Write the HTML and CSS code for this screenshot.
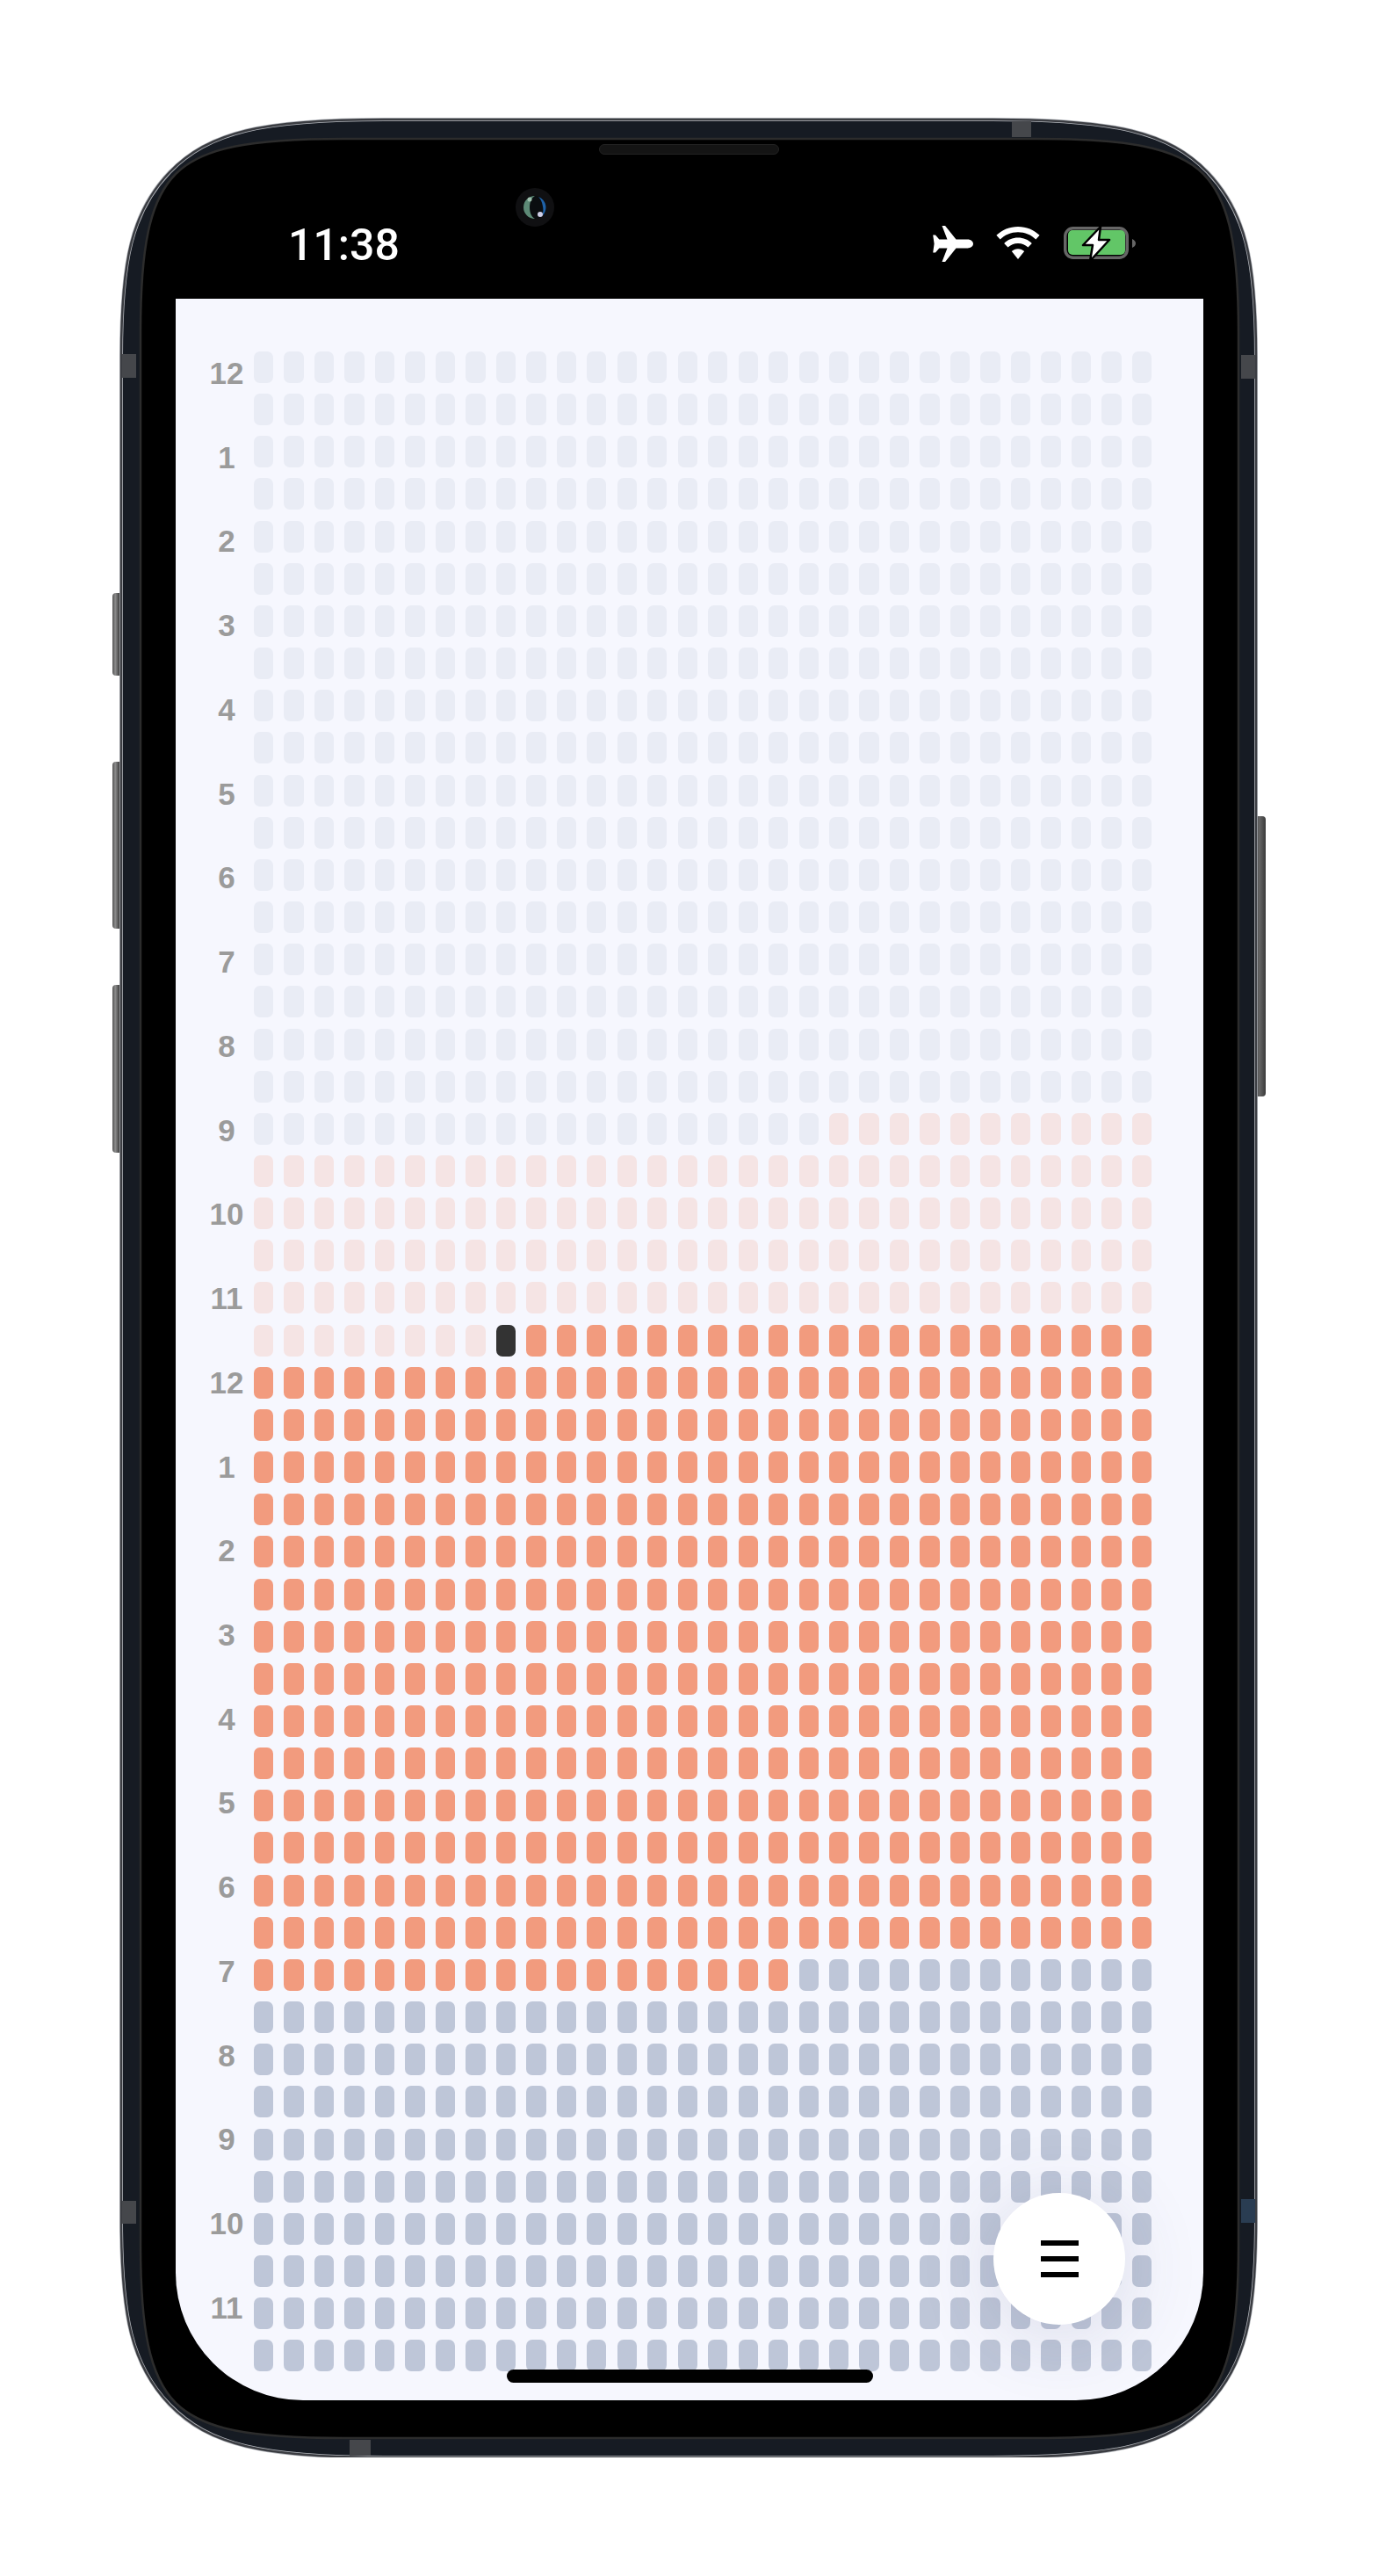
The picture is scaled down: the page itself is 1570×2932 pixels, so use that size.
FILE: index.html
```html
<!DOCTYPE html>
<html lang="en">
<head>
    <meta charset="UTF-8">
    <meta name="viewport" content="width=device-width, initial-scale=1.0">
    <title>Day grid</title>
    <link rel="stylesheet" href="styles.css">
</head>
<body>
    <div class="phone">
        <!-- side buttons -->
        <div class="side-btn btn-mute"></div>
        <div class="side-btn btn-up"></div>
        <div class="side-btn btn-down"></div>
        <div class="side-btn btn-power"></div>

        <!-- frame body, drawn because the corners are not circular -->
        <svg class="frame" viewBox="0 0 1292 2661">
            <path d="M0 270C0 160 12 105 55 60C100 14 160 0 300 0H992C1132 0 1192 14 1237 60C1280 105 1292 160 1292 270V2391C1292 2501 1280 2556 1237 2601C1192 2647 1132 2661 992 2661H300C160 2661 100 2647 55 2601C12 2556 0 2501 0 2391Z" fill="#161b23" stroke="#b4b7bd" stroke-width="4"/>
            <path d="M0 270C0 160 12 105 55 60C100 14 160 0 300 0H992C1132 0 1192 14 1237 60C1280 105 1292 160 1292 270V2391C1292 2501 1280 2556 1237 2601C1192 2647 1132 2661 992 2661H300C160 2661 100 2647 55 2601C12 2556 0 2501 0 2391Z" fill="none" stroke="#3b3d42" stroke-width="2.500"/>
            <path transform="translate(22 22)" d="M0 220C0 125 10 70 40 40C70 10 125 0 230 0H1020C1125 0 1180 10 1210 40C1240 70 1250 125 1250 220V2397C1250 2492 1240 2547 1210 2577C1180 2607 1125 2617 1020 2617H230C125 2617 70 2607 40 2577C10 2547 0 2492 0 2397Z" fill="#000" stroke="#2c2c2c" stroke-width="2.500"/>
        </svg>

        <!-- antenna bands -->
        <div class="band band-tl"></div>
        <div class="band band-tr"></div>
        <div class="band band-top"></div>
        <div class="band band-bl"></div>
        <div class="band band-br"></div>
        <div class="band band-bottom"></div>

        <div class="bezel">
            <div class="speaker"></div>
            <svg class="camera" viewBox="0 0 44 44">
                <circle cx="22" cy="22" r="22" fill="#101012"/>
                <circle cx="22" cy="22" r="13" fill="#0a0d10"/>
                <path d="M22 9a13 13 0 0 0 0 26c-4-2-6-7-6-13s2-11 6-13z" fill="#5d8a76"/>
                <path d="M26 10a13 13 0 0 1 4 22c1-3 2-6 1-11s-2-8-5-11z" fill="#1f62a8"/>
                <circle cx="16" cy="13" r="2.500" fill="#9fc0ae"/>
                <circle cx="28" cy="30" r="3" fill="#cfd0e8"/>
            </svg>

            <div class="status">
                <span class="time">11:38</span>
                <div class="status-icons">
                    <svg class="ico-plane" viewBox="0 0 46 41"><path fill="#fff" d="M10.500 0h3.600L26.500 15.600h13.200c3.400 0 6.300 2.200 6.300 4.900s-2.900 4.900-6.300 4.900H26.500L14.100 41h-3.600l6-15.600H7.300L3 30.500H.2L1.600 20.500.2 10.500H3l4.300 5.100h9.200z"/></svg>
                    <svg class="ico-wifi" viewBox="0 0 50 37"><path fill="#fff" d="M25 0c9.500 0 18.200 3.700 24.600 9.800l-4.300 4.600C40 9.300 32.900 6.200 25 6.200S10 9.300 4.700 14.400L.4 9.800C6.800 3.700 15.500 0 25 0zM25 12.600c6.100 0 11.700 2.400 15.800 6.300l-4.300 4.600c-3-2.800-7-4.600-11.500-4.600s-8.500 1.800-11.500 4.600l-4.300-4.600c4.100-3.900 9.700-6.300 15.800-6.300zM25 25.200c2.800 0 5.300 1.100 7.200 2.900L25 37l-7.200-8.900c1.900-1.800 4.400-2.900 7.200-2.900z"/></svg>
                    <svg class="ico-battery" viewBox="0 0 83 41">
                        <rect x="2.750" y="2.750" width="70.500" height="33.500" rx="9" fill="none" stroke="#666" stroke-width="3.500"/>
                        <rect x="6" y="5" width="65" height="28" rx="5" fill="#62c667"/>
                        <path d="M79 15c2.500 1 4 3 4 5s-1.500 4-4 5z" fill="#666"/>
                        <path d="M43 1L23 22H34L31 40L53 16H41z" fill="#fff" stroke="#000" stroke-width="2.500" stroke-linejoin="round"/>
                    </svg>
                </div>
            </div>

            <div class="screen">
                <div class="hours" id="hours"></div>
                <div class="grid" id="grid"></div>
                <div class="fab">
                    <span class="fab-bar"></span>
                    <span class="fab-bar"></span>
                    <span class="fab-bar"></span>
                </div>
                <div class="home-bar"></div>
            </div>
        </div>
    </div>

    <script>
        // hour labels, two rows per hour
        const hours = document.getElementById('hours');
        const names = [12, 1, 2, 3, 4, 5, 6, 7, 8, 9, 10, 11];
        for (let i = 0; i < 24; i++) {
            const label = document.createElement('span');
            label.className = 'hour';
            label.textContent = names[i % 12];
            hours.appendChild(label);
        }

        // which colour a cell gets
        function cellClass(row, col) {
            if (row < 18) return 'off';
            if (row === 18) return col < 19 ? 'off' : 'past';
            if (row < 23) return 'past';
            if (row === 23) {
                if (col < 8) return 'past';
                return col === 8 ? 'now' : 'busy';
            }
            if (row < 38) return 'busy';
            if (row === 38) return col < 18 ? 'busy' : 'free';
            return 'free';
        }

        const grid = document.getElementById('grid');
        for (let row = 0; row < 48; row++) {
            for (let col = 0; col < 30; col++) {
                const cell = document.createElement('div');
                cell.className = 'cell ' + cellClass(row, col);
                grid.appendChild(cell);
            }
        }
    </script>
</body>
</html>
```

FILE: styles.css
```css
body {
    margin: 0;
    background-color: #fff;
    font-family: "Liberation Sans", Arial, sans-serif;
}

/* phone frame */
.phone {
    position: relative;
    width: 1292px;
    height: 2661px;
    margin: 136px 0 0 138px;
    padding: 22px 20px 22px 22px;
    box-sizing: border-box;
}

.frame {
    position: absolute;
    left: 0;
    top: 0;
    width: 1292px;
    height: 2661px;
    overflow: visible;
}

.bezel {
    position: relative;
    height: 100%;
    padding: 0 40px 43px;
    box-sizing: border-box;
    display: flex;
    flex-direction: column;
}

.side-btn {
    position: absolute;
    width: 11px;
    background: linear-gradient(90deg, #555 0, #8c8c8c 30%, #3a3a3a 75%, #333 100%);
    border-radius: 4px 0 0 4px;
}

.btn-mute { left: -10px; top: 539px; height: 94px; }
.btn-up { left: -10px; top: 731px; height: 190px; }
.btn-down { left: -10px; top: 985px; height: 191px; }

.btn-power {
    left: 1291px;
    top: 793px;
    width: 12px;
    height: 319px;
    background: linear-gradient(90deg, #3c3c3c 0, #666 40%, #3a3a3a 100%);
    border-radius: 0 4px 4px 0;
}

.band {
    position: absolute;
    background-color: #45474b;
}

.band-tl { left: 1px; top: 267px; width: 16px; height: 27px; }
.band-tr { right: 1px; top: 268px; width: 16px; height: 27px; }
.band-top { left: 1014px; top: 2px; width: 22px; height: 18px; }
.band-bl { left: 1px; top: 2369px; width: 16px; height: 26px; }
.band-br { right: 1px; top: 2367px; width: 16px; height: 27px; background-color: #2a3d52; }
.band-bottom { left: 260px; bottom: 2px; width: 24px; height: 18px; }

/* notch hardware */
.speaker {
    position: absolute;
    left: 522px;
    top: 6px;
    width: 205px;
    height: 12px;
    box-sizing: border-box;
    background-color: #141414;
    border: 1px solid #222;
    border-radius: 6px;
}

.camera {
    position: absolute;
    left: 427px;
    top: 56px;
    width: 44px;
    height: 44px;
}

/* status bar */
.status {
    height: 182px;
    flex-shrink: 0;
    padding: 99px 77px 0 128px;
    box-sizing: border-box;
    display: flex;
    justify-content: space-between;
    align-items: flex-start;
}

.time {
    color: #fff;
    font-family: Roboto, sans-serif;
    font-size: 50px;
    font-weight: 500;
    line-height: 44px;
}

.status-icons {
    display: flex;
    align-items: flex-start;
    gap: 26px;
}

.ico-plane { width: 46px; height: 41px; }
.ico-wifi { width: 50px; height: 37px; margin-top: 1px; }
.ico-battery { width: 83px; height: 41px; }

/* main screen */
.screen {
    position: relative;
    flex: 1;
    min-height: 0;
    padding: 60px 59px 0 28px;
    display: flex;
    background-color: #f6f7fe;
    border-radius: 0 0 145px 145px;
}

.hours {
    width: 60px;
    margin: 7px 1px 0 0;
    flex-shrink: 0;
    display: grid;
    grid-template-rows: repeat(24, 95.74px);
    align-content: start;
    justify-items: center;
}

.hour {
    color: #9b9b9b;
    font-size: 35px;
    font-weight: 700;
    line-height: 35px;
}

.grid {
    flex: 1;
    display: grid;
    grid-template-columns: repeat(30, 1fr);
    grid-template-rows: repeat(48, 36px);
    column-gap: 12.2px;
    row-gap: 12.17px;
    align-content: start;
}

.cell { border-radius: 7px; }
.off { background-color: #e9ecf5; }
.past { background-color: #f5e4e4; }
.busy { background-color: #f29b7e; }
.free { background-color: #bec6d8; }
.now { background-color: #333; }

/* floating menu button */
.fab {
    position: absolute;
    left: 931px;
    top: 2156px;
    width: 150px;
    height: 150px;
    background-color: #fff;
    border-radius: 50%;
    box-shadow: 0 10px 90px rgba(60, 70, 110, 0.16);
    display: flex;
    flex-direction: column;
    align-items: center;
    justify-content: center;
    gap: 12px;
}

.fab-bar {
    width: 43px;
    height: 6px;
    background-color: #000;
}

.home-bar {
    position: absolute;
    left: 377px;
    top: 2357px;
    width: 417px;
    height: 15px;
    background-color: #000;
    border-radius: 8px;
}
```
